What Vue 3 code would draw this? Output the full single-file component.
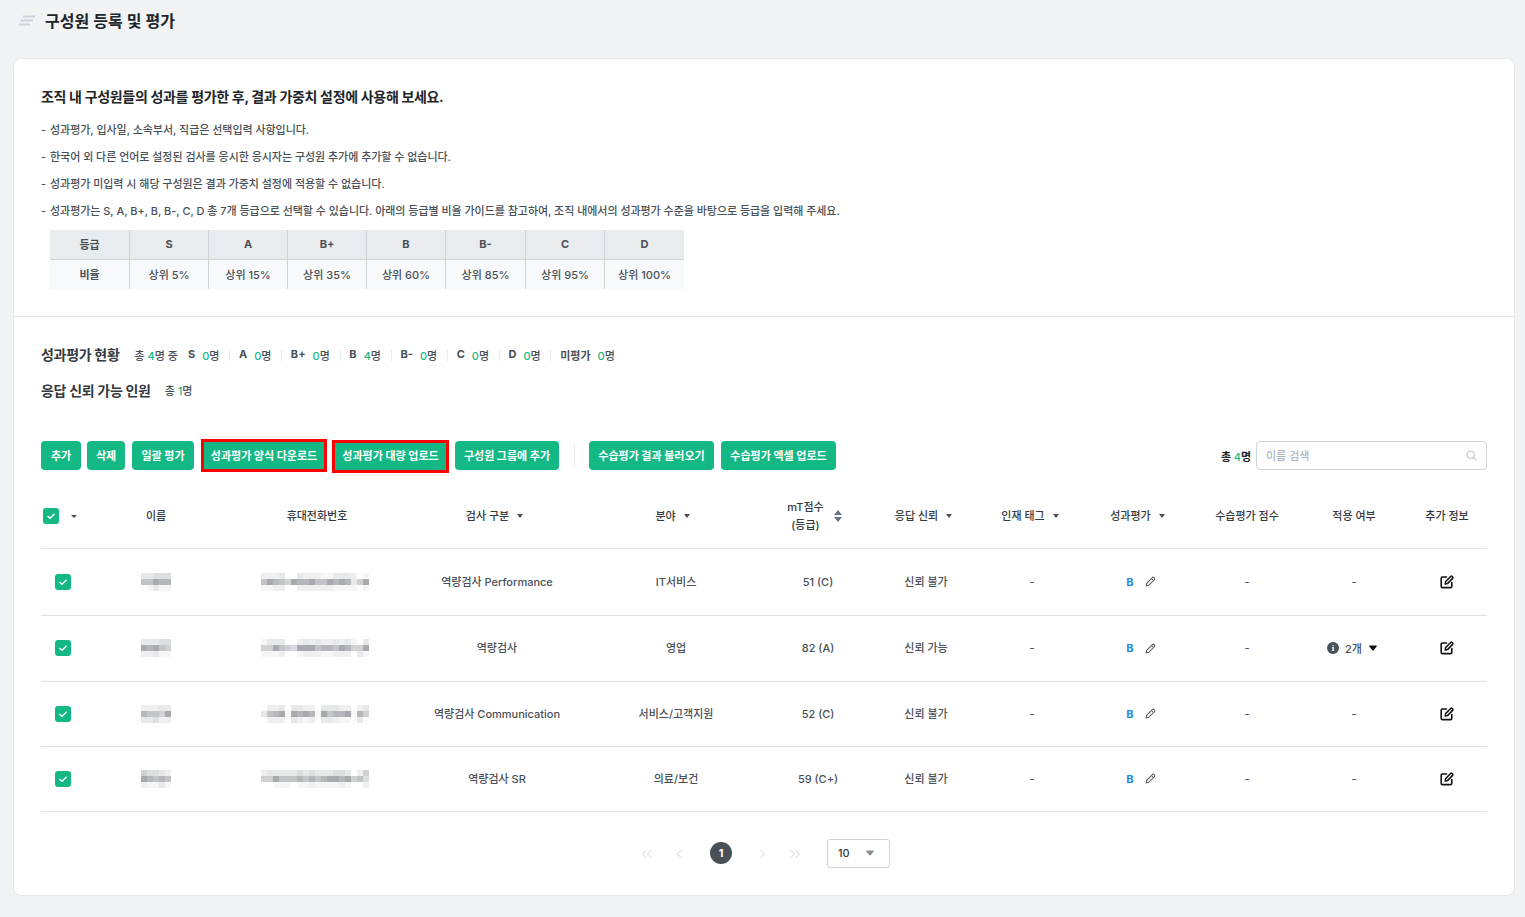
<script setup>
const grades = ['S', 'A', 'B+', 'B', 'B-', 'C', 'D']
const ratios = ['상위 5%', '상위 15%', '상위 35%', '상위 60%', '상위 85%', '상위 95%', '상위 100%']
const notes = [
  '성과평가, 입사일, 소속부서, 직급은 선택입력 사항입니다.',
  '한국어 외 다른 언어로 설정된 검사를 응시한 응시자는 구성원 추가에 추가할 수 없습니다.',
  '성과평가 미입력 시 해당 구성원은 결과 가중치 설정에 적용할 수 없습니다.',
  '성과평가는 S, A, B+, B, B-, C, D 총 7개 등급으로 선택할 수 있습니다. 아래의 등급별 비율 가이드를 참고하여, 조직 내에서의 성과평가 수준을 바탕으로 등급을 입력해 주세요.'
]
const stats = [
  ['S', 0], ['A', 0], ['B+', 0], ['B', 4], ['B-', 0], ['C', 0], ['D', 0], ['미평가', 0]
]
const leftButtons = [
  { label: '추가' }, { label: '삭제' }, { label: '일괄 평가' },
  { label: '성과평가 양식 다운로드', mark: true },
  { label: '성과평가 대량 업로드', mark: true },
  { label: '구성원 그룹에 추가' }
]
const rightButtons = ['수습평가 결과 불러오기', '수습평가 엑셀 업로드']
const headers = [
  { label: '이름' }, { label: '휴대전화번호' }, { label: '검사 구분', caret: true }, { label: '분야', caret: true },
  { label: 'mT점수\n(등급)', sort: true }, { label: '응답 신뢰', caret: true }, { label: '인재 태그', caret: true },
  { label: '성과평가', caret: true }, { label: '수습평가 점수' }, { label: '적용 여부' }, { label: '추가 정보' }
]
const shades = ['#ffffff', '#f6f6f7', '#efeff0', '#e7e8ea', '#dddee1', '#d0d1d4', '#c3c4c7', '#b6b7ba', '#a9aaae', '#9a9ba1']
const rows = [
  {
    name: ['33444', '66877', '01311'],
    phone: ['222300322211333201', '687658778668787358', '112200222222111101'],
    test: '역량검사 Performance', field: 'IT서비스', score: '51 (C)', trust: '신뢰 불가', apply: false
  },
  {
    name: ['33344', '87865', '22311'],
    phone: ['133300232322323103', '558654888677687558', '111200122211222031'],
    test: '역량검사', field: '영업', score: '82 (A)', trust: '신뢰 가능', apply: true
  },
  {
    name: ['22233', '76658', '33422'],
    phone: ['022303322033322023', '367818787186778175', '022203212033211030'],
    test: '역량검사 Communication', field: '서비스/고객지원', score: '52 (C)', trust: '신뢰 불가', apply: false
  },
  {
    name: ['54432', '87676', '21131'],
    phone: ['233333434333443025', '558666767678878564', '001110112111121002'],
    test: '역량검사 SR', field: '의료/보건', score: '59 (C+)', trust: '신뢰 불가', apply: false
  }
]
const cells = (r) => r.join('').split('').map((c) => shades[Number(c)])
</script>

<template>
  <div class="page">
    <header class="top">
      <svg class="menu" width="18" height="12" viewBox="0 0 18 12" fill="none">
        <path d="M5 1.5H17M2.5 5.5H15M1 9.5H12" stroke="#ced4da" stroke-width="1.8" />
      </svg>
      <h1>구성원 등록 및 평가</h1>
    </header>

    <main class="card">
      <section class="intro">
        <h2>조직 내 구성원들의 성과를 평가한 후, 결과 가중치 설정에 사용해 보세요.</h2>
        <ul class="notes">
          <li v-for="n in notes" :key="n"><span class="dash">-</span>{{ n }}</li>
        </ul>
        <div class="grade-table">
          <div class="g-cell head">등급</div>
          <div v-for="g in grades" :key="g" class="g-cell head">{{ g }}</div>
          <div class="g-cell first">비율</div>
          <div v-for="r in ratios" :key="r" class="g-cell">{{ r }}</div>
        </div>
      </section>

      <section class="body">
        <div class="summary">
          <h3>성과평가 현황</h3>
          <span class="total">총 <b>4</b>명 중</span>
          <div class="stats">
            <span v-for="s in stats" :key="s[0]" class="stat"><strong>{{ s[0] }}</strong><span><b>{{ s[1] }}</b>명</span></span>
          </div>
        </div>
        <div class="summary second">
          <h3>응답 신뢰 가능 인원</h3>
          <span class="total">총 <b>1</b>명</span>
        </div>

        <div class="toolbar">
          <div class="btns">
            <button v-for="b in leftButtons" :key="b.label" :class="{ mark: b.mark }">{{ b.label }}</button>
            <i class="sep"></i>
            <button v-for="b in rightButtons" :key="b">{{ b }}</button>
          </div>
          <div class="search-wrap">
            <span class="count">총 <b>4</b>명</span>
            <div class="search">
              <span>이름 검색</span>
              <svg width="11" height="11" viewBox="0 0 11 11" fill="none">
                <circle cx="4.7" cy="4.7" r="3.7" stroke="#c4cad0" stroke-width="1.2" />
                <path d="M7.5 7.5L10.3 10.3" stroke="#c4cad0" stroke-width="1.2" />
              </svg>
            </div>
          </div>
        </div>

        <table class="list">
          <colgroup>
            <col style="width: 44px" /><col style="width: 142px" /><col style="width: 180px" />
            <col style="width: 180px" /><col style="width: 178px" /><col style="width: 106px" />
            <col style="width: 106px" /><col style="width: 110px" /><col style="width: 106px" />
            <col style="width: 108px" /><col style="width: 106px" /><col style="width: 80px" />
          </colgroup>
          <thead>
            <tr>
              <th class="check-head">
                <div class="check-wrap">
                  <span class="check">
                    <svg width="10" height="8" viewBox="0 0 10 8" fill="none"><path d="M1.5 4L4 6.3L8.6 1.7" stroke="#fff" stroke-width="1.3" /></svg>
                  </span>
                  <i class="caret small"></i>
                </div>
              </th>
              <th v-for="h in headers" :key="h.label">
                <div class="th-in">
                  <span class="th-label">{{ h.label }}</span>
                  <i v-if="h.caret" class="caret"></i>
                  <span v-if="h.sort" class="sort"><i class="up"></i><i class="caret big"></i></span>
                </div>
              </th>
            </tr>
          </thead>
          <tbody>
            <tr v-for="r in rows" :key="r.test">
              <td>
                <span class="check center">
                  <svg width="10" height="8" viewBox="0 0 10 8" fill="none"><path d="M1.5 4L4 6.3L8.6 1.7" stroke="#fff" stroke-width="1.3" /></svg>
                </span>
              </td>
              <td>
                <div class="mosaic name">
                  <i v-for="(c, i) in cells(r.name)" :key="i" :style="{ background: c }"></i>
                </div>
              </td>
              <td class="phone-cell">
                <div class="mosaic phone">
                  <i v-for="(c, i) in cells(r.phone)" :key="i" :style="{ background: c }"></i>
                </div>
              </td>
              <td class="t">{{ r.test }}</td>
              <td class="t">{{ r.field }}</td>
              <td>{{ r.score }}</td>
              <td class="t trust">{{ r.trust }}</td>
              <td>-</td>
              <td>
                <div class="grade">
                  <b>B</b>
                  <svg width="11" height="11" viewBox="0 0 11 11" fill="none">
                    <path d="M1.2 9.8L1.7 7.3L7.4 1.6C7.9 1.1 8.6 1.1 9.1 1.6L9.4 1.9C9.9 2.4 9.9 3.1 9.4 3.6L3.7 9.3L1.2 9.8Z" stroke="#555b63" stroke-width="1.05" />
                    <path d="M6.5 2.6L8.4 4.5" stroke="#555b63" stroke-width="1" />
                  </svg>
                </div>
              </td>
              <td>-</td>
              <td>
                <div v-if="r.apply" class="apply">
                  <span class="info">i</span>
                  <span>2개</span>
                  <svg width="8" height="6" viewBox="0 0 8 6"><path d="M0.9 0.4H7.1C7.8 0.4 8.1 1.1 7.7 1.6L4.6 5.2C4.3 5.6 3.7 5.6 3.4 5.2L0.3 1.6C-0.1 1.1 0.2 0.4 0.9 0.4Z" fill="#111" /></svg>
                </div>
                <template v-else>-</template>
              </td>
              <td>
                <svg class="edit" width="14" height="14" viewBox="0 0 14 14" fill="none">
                  <path d="M6.5 2H2.5C1.7 2 1.2 2.5 1.2 3.3V11.2C1.2 12 1.7 12.6 2.5 12.6H10.4C11.2 12.6 11.8 12 11.8 11.2V7.5" stroke="#111" stroke-width="1.6" stroke-linecap="round" />
                  <path d="M5.2 9L5.6 6.6L10.7 1.5C11.1 1.1 11.7 1.1 12.1 1.5L12.6 2C13 2.4 13 3 12.6 3.4L7.5 8.6L5.2 9Z" stroke="#111" stroke-width="1.5" stroke-linejoin="round" />
                </svg>
              </td>
            </tr>
          </tbody>
        </table>

        <nav class="pager">
          <svg class="pg a" width="12" height="10" viewBox="0 0 12 10" fill="none"><path d="M5.5 1L1.5 5L5.5 9M10.5 1L6.5 5L10.5 9" stroke="#ced4da" stroke-width="1" /></svg>
          <svg class="pg b" width="7" height="10" viewBox="0 0 7 10" fill="none"><path d="M5.5 1L1.5 5L5.5 9" stroke="#ced4da" stroke-width="1" /></svg>
          <span class="current">1</span>
          <svg class="pg c" width="7" height="10" viewBox="0 0 7 10" fill="none"><path d="M1.5 1L5.5 5L1.5 9" stroke="#ced4da" stroke-width="1" /></svg>
          <svg class="pg d" width="12" height="10" viewBox="0 0 12 10" fill="none"><path d="M1.5 1L5.5 5L1.5 9M6.5 1L10.5 5L6.5 9" stroke="#ced4da" stroke-width="1" /></svg>
          <div class="size"><span>10</span><svg width="8" height="6" viewBox="0 0 8 6"><path d="M0.9 0.4H7.1C7.8 0.4 8.1 1.1 7.7 1.6L4.6 5.2C4.3 5.6 3.7 5.6 3.4 5.2L0.3 1.6C-0.1 1.1 0.2 0.4 0.9 0.4Z" fill="#868e96" /></svg></div>
        </nav>
      </section>
    </main>
  </div>
</template>

<style>
html, body { margin: 0; background: #f1f3f5; }
</style>

<style scoped>
* { box-sizing: border-box; }
.page {
  width: 1525px;
  height: 917px;
  overflow: hidden;
  background: #f1f3f5;
  font-family: Inter, "Noto Sans CJK KR", sans-serif;
  color: #495057;
  font-size: 11px;
}
.top {
  height: 58px;
  padding: 0 0 16px 18px;
  display: flex;
  align-items: center;
  gap: 9px;
}
.top h1 {
  margin: 0;
  font-size: 16px;
  font-weight: 600;
  color: #212529;
  line-height: 1;
}
.card {
  width: 1502px;
  height: 838px;
  margin-left: 13px;
  background: #fff;
  border: 1px solid #e5e7eb;
  border-radius: 8px;
}
.intro {
  height: 258px;
  padding: 27px 27px 0;
  border-bottom: 1px solid #dee2e6;
}
.intro h2 {
  margin: 0 0 9px;
  font-size: 14px;
  line-height: 22px;
  font-weight: 700;
  letter-spacing: -0.32px;
  color: #212529;
}
.notes {
  list-style: none;
  margin: 0;
  padding: 0;
}
.notes li {
  height: 27px;
  line-height: 27px;
  white-space: nowrap;
  letter-spacing: -0.04px;
  font-weight: 500;
}
.dash { display: inline-block; width: 9px; }
.grade-table {
  margin: 5px 0 0 9px;
  width: 634px;
  display: grid;
  grid-template-columns: 80px 79px 79px 79px 79px 80px 79px 79px;
  grid-template-rows: 30px 29px;
  font-weight: 500;
}
.g-cell {
  display: flex;
  align-items: center;
  justify-content: center;
  background: #f8f9fa;
  border-right: 1px solid #ced4da;
  padding-bottom: 1px;
}
.g-cell:nth-child(8), .g-cell:last-child { border-right: 0; }
.g-cell.head {
  background: #e9ecef;
  border-bottom: 1px solid #ced4da;
  font-weight: 700;
}
.g-cell.first { font-weight: 700; }
.body { padding: 0 27px; }
.summary {
  display: flex;
  align-items: center;
  margin-top: 27px;
  height: 22px;
}
.summary.second { margin-top: 13px; }
.summary h3 {
  margin: 0 15px 2px 0;
  font-size: 14px;
  font-weight: 700;
  letter-spacing: -0.3px;
  color: #343a40;
}
.summary.second h3 { margin-right: 14px; margin-bottom: 0; }
.total { font-weight: 500; }
.total b, .stat b, .count b { color: #14b885; font-weight: 500; }
.stats { display: flex; margin-left: 10px; }
.stat {
  display: flex;
  gap: 7px;
  padding: 0 9.75px;
  font-weight: 500;
  position: relative;
}
.stat:first-child { padding-left: 0; }
.stat + .stat::before {
  content: "";
  position: absolute;
  left: 0;
  top: 3px;
  height: 11px;
  width: 1px;
  background: #e9ecef;
}
.stat strong { font-weight: 700; color: #495057; }
.toolbar {
  margin-top: 40px;
  display: flex;
  justify-content: space-between;
  align-items: center;
  height: 29px;
}
.btns { display: flex; align-items: center; }
button {
  height: 29px;
  margin-right: 7px;
  padding: 0 0 2px;
  border: 0;
  border-radius: 4px;
  background: #14b885;
  color: #fff;
  font: 700 11px Inter, "Noto Sans CJK KR", sans-serif;
  white-space: nowrap;
}
button.mark {
  height: 33px;
  border: 3px solid #f00;
  border-radius: 0;
}
.btns button:nth-child(1) { width: 40px; margin-right: 6px; }
.btns button:nth-child(2) { width: 38px; }
.btns button:nth-child(3) { width: 62px; }
.btns button:nth-child(4) { width: 126px; margin-right: 5px; }
.btns button:nth-child(5) { width: 117px; margin-right: 6px; margin-top: 2px; padding-bottom: 4px; }
.btns button:nth-child(6) { width: 104px; margin-right: 15px; }
.btns button:nth-child(8) { width: 125px; }
.btns button:nth-child(9) { width: 115px; margin-right: 0; }
.sep {
  width: 1px;
  height: 25px;
  background: #e9ecef;
  margin-right: 14px;
}
.search-wrap { display: flex; align-items: center; gap: 5px; }
.count { font-weight: 700; color: #212529; }
.search {
  width: 231px;
  height: 29px;
  border: 1px solid #ced4da;
  border-radius: 4px;
  display: flex;
  align-items: center;
  justify-content: space-between;
  padding: 0 9px 1px;
  color: #adb5bd;
  font-weight: 500;
}
.list {
  margin-top: 19px;
  width: 1446px;
  table-layout: fixed;
  border-collapse: collapse;
}
.list th {
  height: 59px;
  padding: 0 0 4px;
  font-size: 11px;
  font-weight: 500;
  color: #343a40;
  border-bottom: 1px solid #dee2e6;
}
.list th:nth-child(4) { padding-right: 5px; }
.list th:nth-child(5) { padding-right: 7px; }
.list th:nth-child(6) { padding-right: 7px; }
.list th:nth-child(7) { padding-right: 1px; }
.list th:nth-child(8) { padding-right: 4px; }
.list th:nth-child(9) { padding-right: 5px; }
.list td {
  padding: 0;
  text-align: center;
  font-weight: 500;
  border-bottom: 1px solid #dee2e6;
}
.list td.t { padding-bottom: 2px; }
.list td.trust { padding-left: 4px; }
.list td.phone-cell { padding-right: 4px; }
.list tbody tr:nth-child(1) td { height: 67px; }
.list tbody tr:nth-child(2) td { height: 66px; }
.list tbody tr:nth-child(3) td { height: 65px; }
.list tbody tr:nth-child(4) td { height: 65px; }
.check-wrap { display: flex; align-items: center; gap: 12px; padding-left: 2px; width: 60px; }
.check {
  width: 16px;
  height: 16px;
  border-radius: 3px;
  background: #14b885;
  display: flex;
  align-items: center;
  justify-content: center;
}
.check.center { margin-left: 14px; }
.th-in {
  display: flex;
  align-items: center;
  justify-content: center;
  gap: 8px;
}
.th-label { white-space: pre-line; line-height: 18px; }
.caret {
  display: inline-block;
  width: 0;
  height: 0;
  border-left: 3px solid transparent;
  border-right: 3px solid transparent;
  border-top: 4px solid #495057;
}
.caret.small { border-top-width: 3.5px; }
.caret.big { border-left-width: 4px; border-right-width: 4px; border-top: 5px solid #6b7280; }
.sort { display: flex; flex-direction: column; gap: 2px; margin-left: 2px; }
.sort .up {
  width: 0;
  height: 0;
  border-left: 4px solid transparent;
  border-right: 4px solid transparent;
  border-bottom: 5px solid #6b7280;
}
.mosaic { display: grid; grid-auto-rows: 6px; margin: 0 auto; }
.mosaic i { display: block; }
.mosaic.name { width: 30px; grid-template-columns: repeat(5, 6px); }
.mosaic.phone { width: 108px; grid-template-columns: repeat(18, 6px); }
.grade {
  display: flex;
  align-items: center;
  justify-content: center;
  gap: 11px;
  padding-left: 2px;
}
.grade b { color: #228be6; font-weight: 700; }
.apply { display: flex; align-items: center; justify-content: center; gap: 6px; padding-right: 4px; }
.apply svg { margin-left: 1px; }
.info {
  width: 12px;
  height: 12px;
  border-radius: 50%;
  background: #495057;
  color: #fff;
  font: 700 9px/12px "Liberation Serif", serif;
}
.edit { display: block; margin: 0 auto; }
.pager {
  position: relative;
  height: 84px;
  display: block;
}
.pg { position: absolute; top: 37px; }
.pg.a { left: 600px; }
.pg.b { left: 635px; }
.pg.c { left: 718px; }
.pg.d { left: 748px; }
.current {
  position: absolute;
  left: 669px;
  top: 30px;
  width: 22px;
  height: 22px;
  border-radius: 50%;
  background: #495057;
  color: #fff;
  font-weight: 700;
  text-align: center;
  line-height: 22px;
}
.size {
  position: absolute;
  left: 786px;
  top: 27px;
  width: 63px;
  height: 29px;
  border: 1px solid #ced4da;
  border-radius: 3px;
  display: flex;
  align-items: center;
  justify-content: space-between;
  padding: 0 15px 0 10px;
  color: #343a40;
  font-weight: 500;
}
</style>
